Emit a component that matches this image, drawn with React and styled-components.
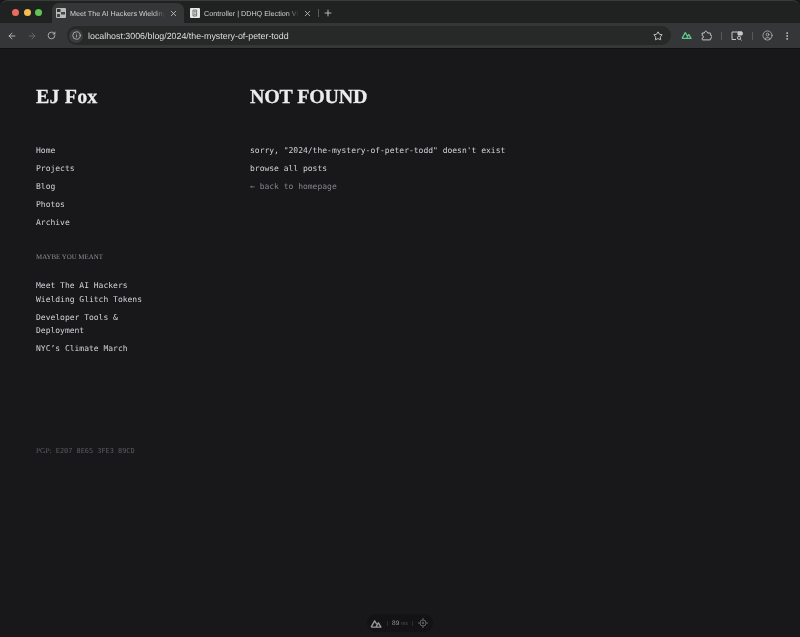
import React from "react";
import styled, { createGlobalStyle } from "styled-components";
import { ArrowLeft, ArrowRight, RotateCw, Info, Star, Plus, X, CircleUser, EllipsisVertical } from "lucide-react";

const Global = createGlobalStyle`
  html, body {
    margin: 0;
    padding: 0;
    height: 637px;
    overflow: hidden;
    background: #18181b;
    text-rendering: geometricPrecision;
  }
`;

const Window = styled.div`
  width: 800px;
  height: 637px;
  display: flex;
  flex-direction: column;
  background: #18181b;
  font-family: "Liberation Sans", sans-serif;
`;

const TabStrip = styled.div`
  height: 23px;
  display: flex;
  align-items: flex-end;
  padding-left: 8px;
  background: #202221;
  border-top: 1px solid #3a3c3b;
  box-sizing: border-box;
  border-radius: 8px 8px 0 0;
`;

const Lights = styled.div`
  display: flex;
  gap: 4.5px;
  align-items: center;
  height: 22px;
  margin: 0 10px 0 4px;
`;

const Light = styled.span`
  width: 7px;
  height: 7px;
  border-radius: 50%;
  background: ${(p) => p.$color};
`;

const Tab = styled.div`
  width: 132px;
  height: 20px;
  padding: 0 6px 0 4px;
  box-sizing: border-box;
  display: flex;
  align-items: center;
  gap: 4px;
  border-radius: 7px 7px 0 0;
  background: ${(p) => (p.$active ? "#343637" : "transparent")};
  color: #d0d2d2;
  margin-right: ${(p) => (p.$active ? "2px" : "0")};
`;

const Favicon = styled.svg`
  width: 10px;
  height: 10px;
  flex: none;
`;

const TabTitle = styled.span`
  flex: 1;
  min-width: 0;
  font-size: 7.2px;
  white-space: nowrap;
  overflow: hidden;
  -webkit-mask-image: linear-gradient(90deg, #000 88%, transparent);
  mask-image: linear-gradient(90deg, #000 88%, transparent);
`;

const NewTab = styled.div`
  display: flex;
  align-items: center;
  height: 20px;
  color: #d0d2d2;
`;

const Divider = styled.span`
  width: 1px;
  height: ${(p) => p.$h || 8}px;
  background: #57595a;
  margin: ${(p) => p.$m || "0"};
`;

const Toolbar = styled.div`
  height: 26px;
  display: flex;
  align-items: center;
  background: #343637;
  padding: 0 8px 0 7px;
  box-sizing: border-box;
  border-bottom: 1px solid #111;
  color: #c7c9c9;
`;

const NavButtons = styled.div`
  display: flex;
  align-items: center;
  gap: 10px;
  margin-right: 11px;
`;

const Omnibox = styled.div`
  flex: 1;
  height: 19px;
  border-radius: 10px;
  background: #272929;
  display: flex;
  align-items: center;
  padding: 0 8px 0 2px;
  margin-right: 10px;
`;

const SiteInfo = styled.span`
  width: 14px;
  height: 14px;
  border-radius: 50%;
  background: #3a3c3c;
  display: flex;
  align-items: center;
  justify-content: center;
  margin-right: 5px;
`;

const Url = styled.span`
  flex: 1;
  font-size: 8.85px;
  color: #dcdede;
  will-change: opacity;
`;

const Actions = styled.div`
  display: flex;
  align-items: center;
  gap: 9px;
`;

const Page = styled.div`
  flex: 1;
  position: relative;
  display: flex;
  padding: 38px 36px 0;
  color: #e4e4e7;
  will-change: opacity;
`;

const Sidebar = styled.aside`
  width: 214px;
  flex: none;
  display: flex;
  flex-direction: column;
`;

const Brand = styled.h1`
  margin: 0;
  height: 20px;
  font: 700 20px/20px "Liberation Serif", serif;
  letter-spacing: 0.15px;
  color: #ececee;
  -webkit-text-stroke: 0.25px #ececee;
`;

const Mono = styled.a`
  display: block;
  font: 400 8px/14px "DejaVu Sans Mono", monospace;
  color: ${(p) => p.$color || "#d4d4d8"};
`;

const Nav = styled.nav`
  margin-top: 37px;
  display: flex;
  flex-direction: column;
  gap: 4px;
`;

const SectionLabel = styled.div`
  margin-top: 23px;
  font: 400 6.9px/10px "Liberation Serif", serif;
  color: #8e8e93;
  text-transform: uppercase;
`;

const Suggestions = styled.div`
  margin-top: 16px;
  width: 112px;
  display: flex;
  flex-direction: column;
  gap: 4.5px;

  ${Mono} {
    line-height: 13.5px;
  }
`;

const Pgp = styled.div`
  margin-top: 90px;
  font: 400 6.9px/10px "DejaVu Sans Mono", monospace;
  color: #5b5b60;

  span {
    font: 400 7.4px/10px "Liberation Serif", serif;
  }
`;

const Main = styled.main`
  flex: 1;
  display: flex;
  flex-direction: column;
`;

const Heading = styled.h2`
  margin: 0;
  height: 20px;
  font: 700 20px/20px "Liberation Serif", serif;
  letter-spacing: -0.2px;
  color: #ececee;
  -webkit-text-stroke: 0.25px #ececee;
`;

const Messages = styled.div`
  margin-top: 37px;
  display: flex;
  flex-direction: column;
  gap: 4px;
`;

const DevPill = styled.div`
  position: absolute;
  left: 367px;
  bottom: 5px;
  height: 18px;
  width: 66px;
  border-radius: 9px;
  background: #131315;
  display: flex;
  align-items: center;
  justify-content: space-between;
  padding: 0 5px 0 3px;
  box-sizing: border-box;
  color: #9a9a9e;
  font-size: 6.5px;
`;

const Ms = styled.span`
  color: #55555a;
  margin-left: 2px;
  font-size: 5px;
`;

const PillDivider = styled.span`
  width: 1px;
  height: 5px;
  background: #2c2c30;
`;

function NuxtMark({ color, size = 11 }) {
  return (
    <svg width={size} height={size * 0.75} viewBox="0 0 16 12" fill="none" stroke={color} strokeWidth="1.8" strokeLinejoin="round">
      <path d="M1.5 10.8 6.2 2.4 9 7M6 10.8h8.6L11.2 5 8 10.8H1.5" />
    </svg>
  );
}

function ExtensionIcon() {
  return (
    <svg width="11" height="11" viewBox="0 0 11 11" fill="none" stroke="#c7c9c9" strokeWidth="1" strokeLinejoin="round">
      <path d="M1.2 3h2.2c0-2.4 3-2.4 3 0h2.6a.6.6 0 0 1 .6.6v1.7c2 0 2 3 0 3v1a.6.6 0 0 1-.6.6H1.8a.6.6 0 0 1-.6-.6V8.2c1.6 0 1.6-2.7 0-2.7z" />
    </svg>
  );
}

function TabIcon({ dark }) {
  return (
    <Favicon viewBox="0 0 10 10">
      <rect width="10" height="10" rx="1" fill={dark ? "#b9bbbb" : "#e8e8e8"} />
      {dark ? (
        <>
          <rect x="1" y="1" width="3.5" height="3" fill="#333" />
          <rect x="5" y="4" width="4" height="2.5" fill="#444" />
          <rect x="1" y="6" width="3" height="3" fill="#444" />
        </>
      ) : (
        <path d="M3 2h3.6v6H3zM4.2 3.5h1.4M4.2 5h1.4M4.2 6.5h1.4" stroke="#555" strokeWidth=".8" fill="none" />
      )}
    </Favicon>
  );
}

const navLinks = ["Home", "Projects", "Blog", "Photos", "Archive"];
const suggestions = ["Meet The AI Hackers Wielding Glitch Tokens", "Developer Tools & Deployment", "NYC’s Climate March"];

export default function App() {
  return (
    <Window>
      <Global />
      <TabStrip>
        <Lights>
          <Light $color="#ed6a5e" />
          <Light $color="#f4bf4f" />
          <Light $color="#61c554" />
        </Lights>
        <Tab $active>
          <TabIcon dark />
          <TabTitle>Meet The AI Hackers Wielding</TabTitle>
          <X size={9} strokeWidth={2} />
        </Tab>
        <Tab>
          <TabIcon />
          <TabTitle>Controller | DDHQ Election Vi</TabTitle>
          <X size={9} strokeWidth={2} />
        </Tab>
        <NewTab>
          <Divider $m="0 4px 0 0" />
          <Plus size={10} strokeWidth={2} />
        </NewTab>
      </TabStrip>
      <Toolbar>
        <NavButtons>
          <ArrowLeft size={10} strokeWidth={2} />
          <ArrowRight size={10} strokeWidth={2} color="#6d6f70" />
          <RotateCw size={9} strokeWidth={2} />
        </NavButtons>
        <Omnibox>
          <SiteInfo>
            <Info size={9} strokeWidth={2} />
          </SiteInfo>
          <Url>localhost:3006/blog/2024/the-mystery-of-peter-todd</Url>
          <Star size={10} strokeWidth={2} color="#e2e4e4" />
        </Omnibox>
        <Actions>
          <NuxtMark color="#5fc88a" />
          <ExtensionIcon />
          <Divider />
          <svg width="12" height="10" viewBox="0 0 12 10" fill="none" stroke="#c7c9c9" strokeWidth="1">
            <path d="M5 8.5H1V1h10v3" />
            <path d="M7 1h4v3H7z" fill="#c7c9c9" />
            <circle cx="8" cy="6.8" r="1.6" />
            <path d="m9.2 8 1.4 1.4" />
          </svg>
          <Divider />
          <CircleUser size={11} strokeWidth={1.5} />
          <EllipsisVertical size={10} strokeWidth={2.2} />
        </Actions>
      </Toolbar>
      <Page>
        <Sidebar>
          <Brand>EJ Fox</Brand>
          <Nav>
            {navLinks.map((link) => (
              <Mono key={link}>{link}</Mono>
            ))}
          </Nav>
          <SectionLabel>Maybe you meant</SectionLabel>
          <Suggestions>
            {suggestions.map((title) => (
              <Mono key={title}>{title}</Mono>
            ))}
          </Suggestions>
          <Pgp>
            <span>PGP:</span> E207 8E65 3FE3 89CD
          </Pgp>
        </Sidebar>
        <Main>
          <Heading>NOT FOUND</Heading>
          <Messages>
            <Mono>sorry, "2024/the-mystery-of-peter-todd" doesn't exist</Mono>
            <Mono>browse all posts</Mono>
            <Mono $color="#85858a">← back to homepage</Mono>
          </Messages>
        </Main>
        <DevPill>
          <NuxtMark color="#9a9a9e" size={12} />
          <PillDivider />
          <span>
            89<Ms>ms</Ms>
          </span>
          <PillDivider />
          <svg width="10" height="10" viewBox="0 0 10 10" fill="none" stroke="#77777b" strokeWidth=".8">
            <circle cx="5" cy="5" r="3" />
            <circle cx="5" cy="5" r=".8" />
            <path d="M5 0v2M5 8v2M0 5h2M8 5h2" />
          </svg>
        </DevPill>
      </Page>
    </Window>
  );
}
